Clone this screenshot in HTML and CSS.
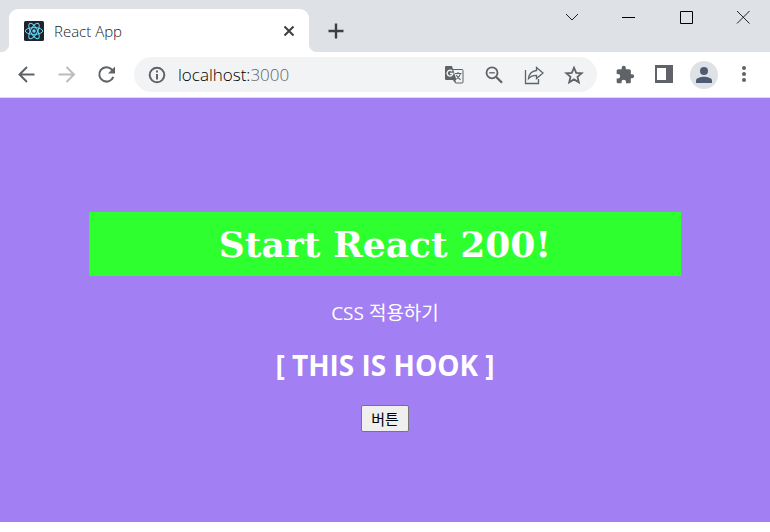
FILE: index.html
```html
<!DOCTYPE html>
<html lang="ko">
<head>
    <meta charset="UTF-8">
    <meta name="viewport" content="width=device-width, initial-scale=1.0">
    <title>React App</title>
    <link rel="stylesheet" href="styles.css">
</head>
<body>
    <header class="browser">
        <div class="tab-strip">
            <div class="tab">
                <svg class="favicon" width="20" height="20" viewBox="0 0 20 20" aria-hidden="true">
                    <rect width="20" height="20" rx="1.5" fill="#20232a"/>
                    <g fill="none" stroke="#61dafb" stroke-width="1">
                        <ellipse cx="10" cy="10" rx="8.7" ry="3.4"/>
                        <ellipse cx="10" cy="10" rx="8.7" ry="3.4" transform="rotate(60 10 10)"/>
                        <ellipse cx="10" cy="10" rx="8.7" ry="3.4" transform="rotate(120 10 10)"/>
                    </g>
                    <circle cx="10" cy="10" r="1.7" fill="#61dafb"/>
                </svg>
                <span class="tab-title">React App</span>
                <button type="button" class="icon-button" aria-label="탭 닫기">
                    <svg width="12" height="12" viewBox="0 0 12 12"><path d="M1.5 1.5l9 9M10.5 1.5l-9 9" fill="none" stroke="#3c4043" stroke-width="2"/></svg>
                </button>
            </div>
            <button type="button" class="icon-button new-tab" aria-label="새 탭">
                <svg width="16" height="16" viewBox="0 0 16 16"><path d="M8 .5v15M.5 8h15" fill="none" stroke="#3c4043" stroke-width="2.4"/></svg>
            </button>
            <div class="window-controls">
                <button type="button" class="icon-button" aria-label="탭 검색">
                    <svg width="14" height="14" viewBox="0 0 14 14"><path d="M1 4l6 6 6-6" fill="none" stroke="#202124"/></svg>
                </button>
                <button type="button" class="icon-button" aria-label="최소화">
                    <svg width="14" height="14" viewBox="0 0 14 14"><path d="M0 7.5h13" fill="none" stroke="#000"/></svg>
                </button>
                <button type="button" class="icon-button" aria-label="최대화">
                    <svg width="14" height="14" viewBox="0 0 14 14"><path d="M1.500 1.500h12v12h-12z" fill="none" stroke="#000"/></svg>
                </button>
                <button type="button" class="icon-button" aria-label="닫기">
                    <svg width="14" height="14" viewBox="0 0 14 14"><path d="M1 1l12.500 12.500M13.500 1L1 13.500" fill="none" stroke="#202124"/></svg>
                </button>
            </div>
        </div>
        <div class="toolbar">
            <nav class="nav-buttons">
                <button type="button" class="icon-button" aria-label="뒤로">
                    <svg width="20" height="20" viewBox="0 0 20 20"><path d="M18.500 9.500H3.500M11 2L3.500 9.500l7.500 7.500" fill="none" stroke="#5f6368" stroke-width="2"/></svg>
                </button>
                <button type="button" class="icon-button" aria-label="앞으로">
                    <svg width="20" height="20" viewBox="0 0 20 20"><path d="M2.500 9.500h15M10.500 2l7.500 7.500-7.500 7.500" fill="none" stroke="#babcbe" stroke-width="2"/></svg>
                </button>
                <button type="button" class="icon-button" aria-label="새로고침">
                    <svg width="20" height="20" viewBox="0 0 20 20"><path d="M17.300 11.800a7.200 7.200 0 1 1-1.500-7.300l1.600 1.500" fill="none" stroke="#5f6368" stroke-width="2"/><path d="M19 1.500v7h-7z" fill="#5f6368"/></svg>
                </button>
            </nav>
            <div class="address-bar">
                <svg width="18" height="18" viewBox="0 0 18 18" aria-hidden="true"><circle cx="9" cy="9" r="7.3" fill="none" stroke="#5f6368" stroke-width="2"/><path d="M9 4.500v2M9 8v5.500" fill="none" stroke="#5f6368" stroke-width="2"/></svg>
                <span class="url">localhost:<span class="port">3000</span></span>
                <div class="address-actions">
                    <button type="button" class="icon-button" aria-label="번역">
                        <svg width="20" height="20" viewBox="0 0 20 20">
                            <path d="M8 4.500h10a1 1 0 0 1 1 1V17a1 1 0 0 1-1 1h-6.500L7 5z" fill="none" stroke="#5f6368" stroke-width="1"/>
                            <path d="M2 1h6l4.500 14H2a1 1 0 0 1-1-1V2a1 1 0 0 1 1-1z" fill="#5f6368"/>
                            <path d="M8.800 15L11.500 18v-3z" fill="#5f6368"/>
                            <path d="M8.200 6.300A2.900 2.900 0 1 0 8.900 8.500H6" fill="none" stroke="#f1f3f4" stroke-width="1.400"/>
                            <path d="M11 8.500h6.500M14 7v1.500M16.500 8.500c-.5 2.300-2 4-4 5.300M12.300 10c1 2 2.500 3.500 4.200 4.800" fill="none" stroke="#5f6368" stroke-width="1.100"/>
                        </svg>
                    </button>
                    <button type="button" class="icon-button" aria-label="축소">
                        <svg width="20" height="20" viewBox="0 0 20 20"><circle cx="8" cy="7.800" r="5.500" fill="none" stroke="#5f6368" stroke-width="1.800"/><path d="M5.200 7.800h5.600" fill="none" stroke="#5f6368" stroke-width="1.300"/><path d="M12 11.800l6 6" fill="none" stroke="#5f6368" stroke-width="2.300"/></svg>
                    </button>
                    <button type="button" class="icon-button" aria-label="공유">
                        <svg width="20" height="20" viewBox="0 0 20 20"><path d="M1.500 5v13.500h13V14" fill="none" stroke="#5f6368" stroke-width="1.300"/><path d="M12.500 2.500L19 8l-6.500 5.500v-3.200c-3.700 0-6 .9-8 3.200.4-4.300 3-7.300 8-8z" fill="none" stroke="#5f6368" stroke-width="1.300"/></svg>
                    </button>
                    <button type="button" class="icon-button" aria-label="북마크">
                        <svg width="20" height="20" viewBox="0 0 20 20"><path d="M10 2.700l2.200 5.100 5.500.5-4.200 3.600 1.300 5.400-4.800-2.900-4.800 2.900 1.300-5.400-4.200-3.600 5.500-.5z" fill="none" stroke="#5f6368" stroke-width="1.800"/></svg>
                    </button>
                </div>
            </div>
            <div class="toolbar-actions">
                <button type="button" class="icon-button" aria-label="확장 프로그램">
                    <svg width="20" height="20" viewBox="0 0 24 24"><path d="M20.500 11H19V7c0-1.100-.9-2-2-2h-4V3.500a2.500 2.500 0 0 0-5 0V5H4c-1.100 0-2 .9-2 2v3.800h1.500a2.700 2.700 0 0 1 0 5.400H2V20c0 1.100.9 2 2 2h3.800v-1.500a2.700 2.700 0 0 1 5.400 0V22H17c1.100 0 2-.9 2-2v-4h1.500a2.500 2.500 0 0 0 0-5z" fill="#5f6368"/></svg>
                </button>
                <button type="button" class="icon-button" aria-label="측면 패널">
                    <svg width="20" height="20" viewBox="0 0 20 20"><path d="M1 0h18v18H1zM3 3v12h9V3z" fill="#5f6368" fill-rule="evenodd"/></svg>
                </button>
                <button type="button" class="icon-button profile" aria-label="프로필">
                    <svg width="18" height="18" viewBox="0 0 18 18"><circle cx="9" cy="5" r="4" fill="#4f5b70"/><path d="M1 17v-2.500C1 12 6 10.800 9 10.800s8 1.200 8 3.700V17z" fill="#4f5b70"/></svg>
                </button>
                <button type="button" class="icon-button" aria-label="메뉴">
                    <svg width="20" height="20" viewBox="0 0 20 20"><g fill="#5f6368"><circle cx="10" cy="3" r="2"/><circle cx="10" cy="9" r="2"/><circle cx="10" cy="15" r="2"/></g></svg>
                </button>
            </div>
        </div>
    </header>
    <main class="page">
        <h1 class="title">Start React 200!</h1>
        <p class="description">CSS 적용하기</p>
        <h2 class="subtitle">[ THIS IS HOOK ]</h2>
        <button type="button" class="hook-button">버튼</button>
    </main>
</body>
</html>
```

FILE: styles.css
```css
* {
    box-sizing: border-box;
}
html,body {
    height: 100%;
}
body {
    margin: 0;
    padding-bottom: 10px;
    background: #fff;
    font-family: "Open Sans", "Noto Sans CJK KR", sans-serif;
    display: flex;
    flex-direction: column;
}
svg {
    display: block;
    flex: none;
}

/* browser */
.icon-button {
    display: flex;
    align-items: center;
    justify-content: center;
    padding: 0;
    border: none;
    background: transparent;
    cursor: pointer;
}
.tab-strip {
    display: flex;
    align-items: flex-start;
    height: 52px;
    padding: 0 20px 0 9px;
    background: #dee1e6;
}
.tab {
    position: relative;
    display: flex;
    align-items: center;
    gap: 10px;
    width: 300px;
    height: 43px;
    margin-top: 9px;
    padding: 0 14px 0 15px;
    border-radius: 9px 9px 0 0;
    background: #fff;
}
/* curved feet of the active tab */
.tab::before,
.tab::after {
    content: "";
    position: absolute;
    bottom: 0;
    width: 9px;
    height: 9px;
}
.tab::before {
    left: -9px;
    background: radial-gradient(circle at 0 0, #dee1e6 9px, #fff 10px);
}
.tab::after {
    right: -9px;
    background: radial-gradient(circle at 100% 0, #dee1e6 9px, #fff 10px);
}
.tab-title {
    flex: 1;
    font-size: 15px;
    font-weight: 300;
    color: #202124;
}
.new-tab {
    height: 43px;
    margin: 9px 0 0 19px;
}
.window-controls {
    display: flex;
    gap: 43px;
    margin-left: auto;
    padding-top: 10px;
}
.toolbar {
    display: flex;
    align-items: center;
    gap: 16px;
    height: 46px;
    padding: 0 16px;
    border-bottom: 1px solid #dadce0;
}
.nav-buttons {
    display: flex;
    gap: 20px;
    padding-right: 2px;
}
.address-bar {
    flex: 1;
    display: flex;
    align-items: center;
    gap: 12px;
    height: 35px;
    padding: 0 13px 0 14px;
    border-radius: 18px;
    background: #f1f3f4;
}
.url {
    flex: 1;
    font-size: 17px;
    font-weight: 300;
    color: #000;
}
.port {
    color: #5f6368;
}
.address-actions {
    display: flex;
    gap: 20px;
}
.toolbar-actions {
    display: flex;
    align-items: center;
    gap: 16px;
    padding-left: 2px;
}
.toolbar-actions .icon-button:first-child {
    margin-right: 3px;
}
.profile {
    width: 28px;
    height: 28px;
    border-radius: 50%;
    background: #dee1e6;
}

/* page */
.page {
    flex: 1;
    display: flex;
    flex-direction: column;
    align-items: center;
    padding-top: 114px;
    background: #a27ff3;
    color: #fff;
    text-align: center;
}
.title {
    width: 77%;
    margin: 0;
    background: #2eff2e;
    font-family: "DejaVu Serif", serif;
    font-size: 36px;
    line-height: 64px;
}
.description {
    margin: 24px 0;
    font-size: 19px;
    line-height: 26px;
}
.subtitle {
    margin: 0 0 24px;
    font-size: 28px;
    line-height: 31px;
}
.hook-button {
    height: 27px;
    padding: 0 9px;
    border: 1px solid #767676;
    border-radius: 2px;
    background: #efefef;
    color: #000;
    font-family: inherit;
    font-size: 15px;
    line-height: 24px;
}
```
